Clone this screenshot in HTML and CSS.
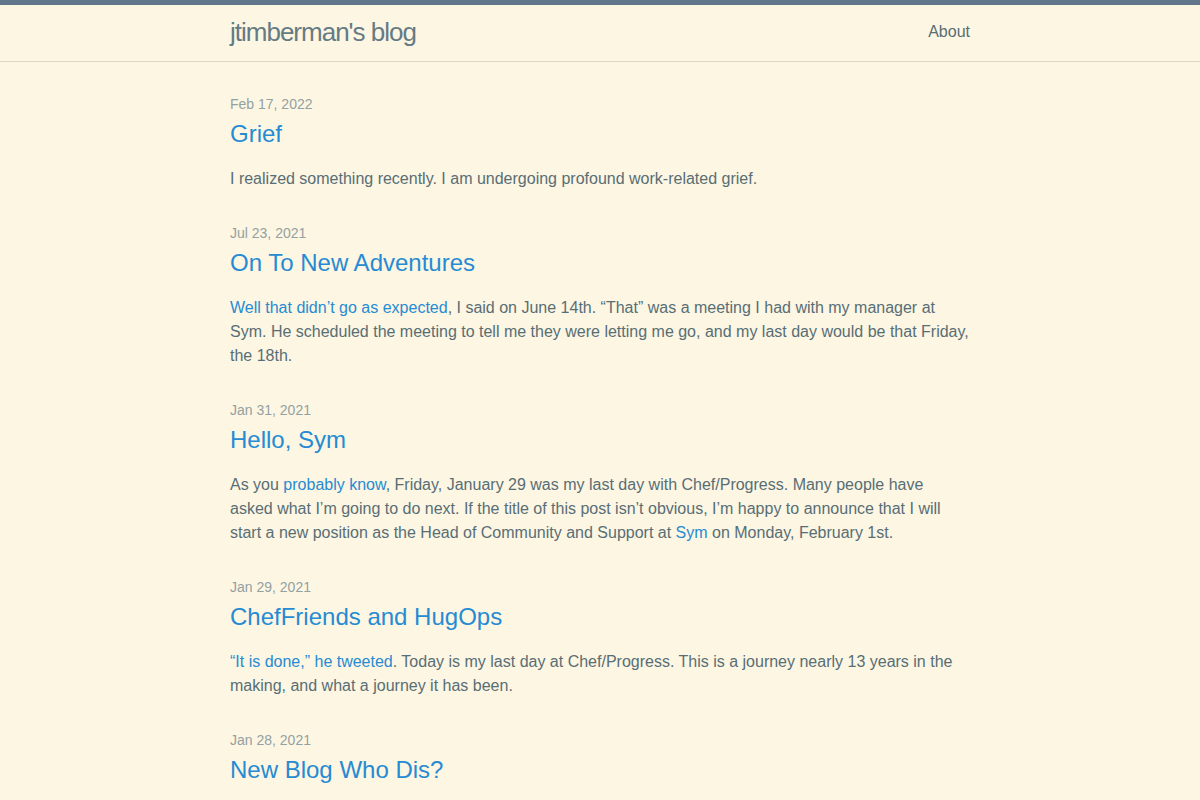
FILE: index.html
```html
<!DOCTYPE html>
<html lang="en">
<head>
    <meta charset="UTF-8">
    <meta name="viewport" content="width=device-width, initial-scale=1.0">
    <title>jtimberman's blog</title>
    <link rel="stylesheet" href="styles.css">
</head>
<body>
    <header class="site-header">
        <div class="wrapper header-row">
            <a class="site-title" href="#">jtimberman's blog</a>
            <nav class="site-nav">
                <a class="page-link" href="#">About</a>
            </nav>
        </div>
    </header>

    <main class="page-content">
        <div class="wrapper">
            <ul class="post-list">
                <li>
                    <span class="post-meta">Feb 17, 2022</span>
                    <h3><a class="post-link" href="#">Grief</a></h3>
                    <p>I realized something recently. I am undergoing profound work-related grief.</p>
                </li>
                <li>
                    <span class="post-meta">Jul 23, 2021</span>
                    <h3><a class="post-link" href="#">On To New Adventures</a></h3>
                    <p><a href="#">Well that didn’t go as expected</a>, I said on June 14th. “That” was a meeting I had with my manager at Sym. He scheduled the meeting to tell me they were letting me go, and my last day would be that Friday, the 18th.</p>
                </li>
                <li>
                    <span class="post-meta">Jan 31, 2021</span>
                    <h3><a class="post-link" href="#">Hello, Sym</a></h3>
                    <p>As you <a href="#">probably know</a>, Friday, January 29 was my last day with Chef/Progress. Many people have asked what I’m going to do next. If the title of this post isn’t obvious, I’m happy to announce that I will start a new position as the Head of Community and Support at <a href="#">Sym</a> on Monday, February 1st.</p>
                </li>
                <li>
                    <span class="post-meta">Jan 29, 2021</span>
                    <h3><a class="post-link" href="#">ChefFriends and HugOps</a></h3>
                    <p><a href="#">“It is done,” he tweeted</a>. Today is my last day at Chef/Progress. This is a journey nearly 13 years in the making, and what a journey it has been.</p>
                </li>
                <li>
                    <span class="post-meta">Jan 28, 2021</span>
                    <h3><a class="post-link" href="#">New Blog Who Dis?</a></h3>
                    <p>Welcome to the new blog. It has been a while since I wrote anything here, so it seemed like a good time for a fresh start.</p>
                </li>
            </ul>
        </div>
    </main>
</body>
</html>
```

FILE: styles.css
```css
/* Base */
body {
    font-family: 'Liberation Sans', Arial, sans-serif;
    font-size: 16px;
    line-height: 1.5;
    background-color: #fdf6e3;
    color: #586e75;
    margin: 0;
    padding: 0;
}

a {
    color: #268bd2;
    text-decoration: none;
}

.wrapper {
    max-width: 740px;
    margin: 0 auto;
    padding: 0 30px;
}

/* Header */
.site-header {
    border-top: 5px solid #61768a;
    border-bottom: 1px solid #ddd6c1;
    min-height: 56px;
}

.header-row {
    display: flex;
    justify-content: space-between;
    align-items: flex-start;
}

.site-title {
    font-size: 26px;
    font-weight: 300;
    line-height: 54px;
    letter-spacing: -1px;
    color: #657b83;
}

.site-nav {
    line-height: 54px;
}

.page-link {
    color: #586e75;
}

/* Post list */
.page-content {
    padding: 30px 0;
}

.post-list {
    list-style: none;
    margin: 0;
    padding: 0;
}

.post-list > li {
    margin-bottom: 30px;
}

.post-meta {
    font-size: 14px;
    color: #93a1a1;
}

.post-list h3 {
    margin: 0 0 15px;
    font-weight: 400;
    line-height: 1.5;
}

.post-link {
    display: block;
    font-size: 24px;
}

.post-list p {
    margin: 0 0 15px;
}
```
